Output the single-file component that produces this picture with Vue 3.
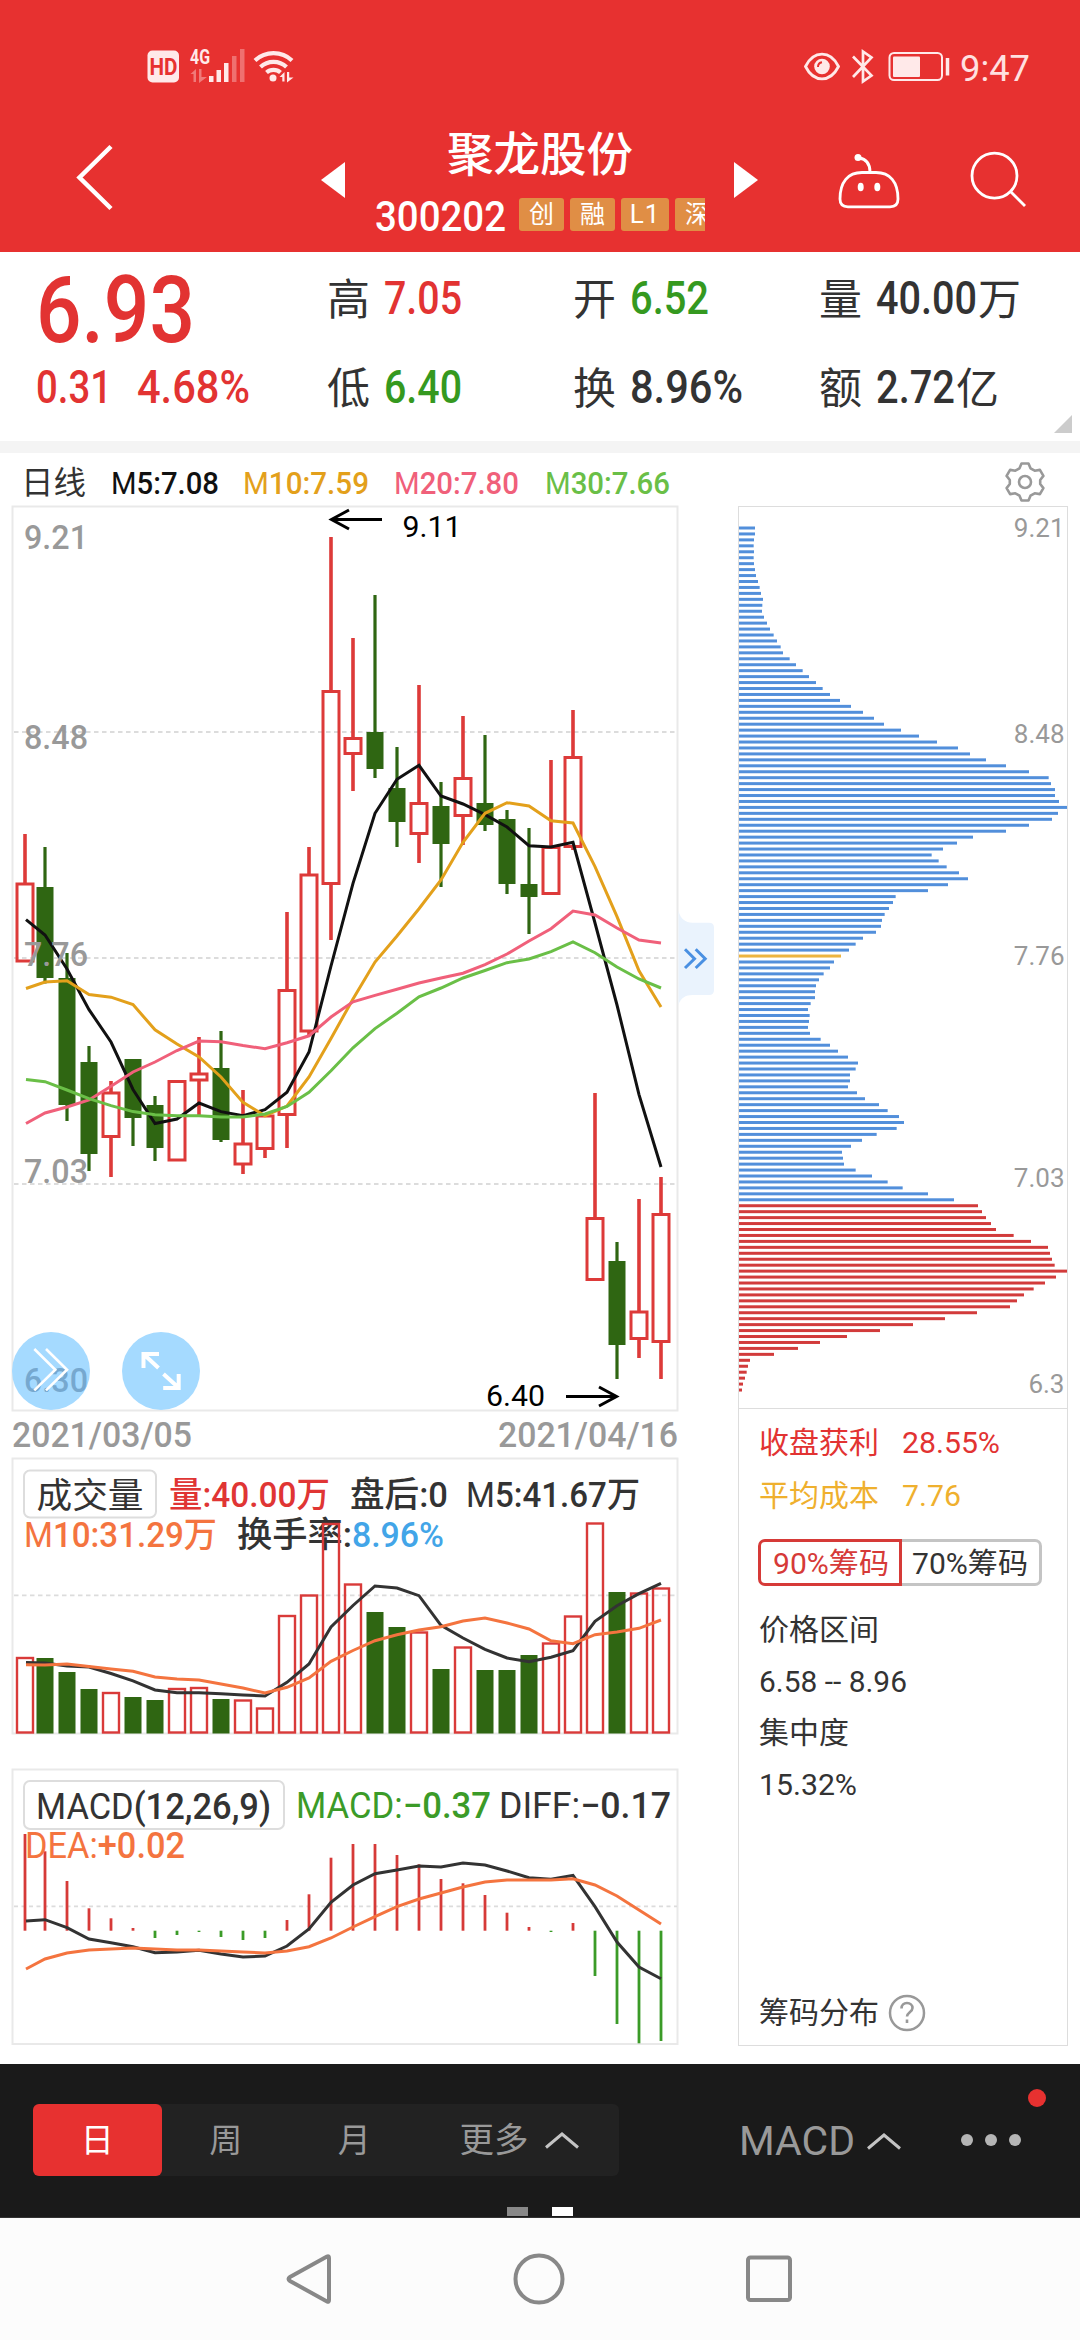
<script setup>
import { h } from 'vue'

// Single line of text squeezed to a fixed width; its box spans cap height down to the baseline.
// A leading "M" of an average label is set in the regular weight.
const Fit = (p) => {
  const height = Math.round(p.s * 7.11) / 10
  const label = /^M\d/.test(p.t) ? [h('tspan', { 'font-weight': 400 }, 'M'), p.t.slice(1)] : p.t
  return h('svg', { class: 'fit', width: p.w, height }, [
    h('text', { x: 0, y: height, 'font-size': p.s, textLength: p.w, lengthAdjust: 'spacingAndGlyphs', fill: 'currentColor' }, label),
  ])
}
Fit.props = ['t', 'w', 's']

const xs = Array.from({ length: 30 }, (_, i) => (i === 0 ? 25 : 23 + i * 22))

// [rising, high, low, body top, body bottom]
const candles = [
  [1, 834, 884, 884, 961], [0, 847, 983.5, 887, 978], [0, 953, 1121, 978, 1105], [0, 1046, 1171, 1062, 1154],
  [1, 1081, 1177, 1093, 1136.5], [0, 1059, 1146, 1059, 1118], [0, 1096, 1161, 1105, 1148], [1, 1082, 1160, 1081.5, 1160],
  [1, 1037, 1115, 1074, 1080], [0, 1031, 1142, 1068, 1140], [1, 1090, 1174, 1144, 1164], [1, 1116, 1158, 1116, 1148.5],
  [1, 912, 1148, 990.5, 1114.5], [1, 847, 1035, 875, 1031], [1, 537, 940, 691.5, 883.5], [1, 638, 791, 738.5, 753.5],
  [0, 595, 778, 732, 769], [0, 747, 847, 788, 822], [1, 685, 863, 803.5, 833.5], [0, 782, 887, 806, 844],
  [1, 716, 845, 778.5, 815.5], [0, 735, 831, 803, 825], [0, 810, 894, 819, 884], [0, 828, 934, 884, 897],
  [1, 760, 894, 847.5, 893.5], [1, 710, 850, 757.5, 846.5], [1, 1093, 1280, 1218.5, 1279.5], [0, 1242, 1379, 1261, 1345],
  [1, 1199, 1358, 1312, 1338.5], [1, 1177, 1379, 1214.5, 1341.5],
].map(([up, hi, lo, top, bot], i) => ({ up, hi, lo, top, bot, x: xs[i] }))

const line = (ys) => ys.map((y, i) => `${i === 0 ? 26 : xs[i]},${y}`).join(' ')

const priceLines = [
  { c: '#111', w: 3, p: line([919.7, 935, 969, 1009.6, 1042, 1089.5, 1123.5, 1119, 1103, 1111.6, 1115.7, 1109.7, 1092.3, 1052, 966, 883.3, 813.3, 779.3, 765.3, 796, 804, 814.7, 827, 845.7, 847, 842.3, 923, 1005, 1094.6, 1167]) },
  { c: '#e3a01b', w: 3, p: line([988.5, 982, 980.7, 994.5, 997.2, 1004.6, 1029.8, 1044, 1057, 1077, 1102.4, 1115.7, 1106, 1077, 1038.5, 999, 962, 936, 908.7, 880, 842.3, 813.3, 802.7, 806, 820.7, 823, 866.7, 916.7, 970.7, 1007]) },
  { c: '#f0607a', w: 3, p: line([1123.5, 1113, 1107, 1100, 1086.3, 1072, 1062, 1050.5, 1041, 1041.8, 1045.5, 1048.7, 1042.7, 1035.8, 1017, 1001.8, 995.4, 989.3, 983, 978, 973.2, 964.6, 954, 941, 928.7, 911, 915, 928, 940, 943]) },
  { c: '#6abf47', w: 3, p: line([1079.4, 1081.7, 1090, 1098.7, 1105.6, 1111.6, 1114.8, 1115.7, 1115.7, 1117, 1117, 1114, 1106.5, 1092.3, 1070.7, 1047.8, 1028.6, 1013.2, 996.8, 988, 978, 970.5, 962.7, 959, 951.7, 942, 952.7, 967, 979, 988]) },
]

const axis = [[549, '9.21'], [749, '8.48'], [966, '7.76'], [1182.5, '7.03']]

const volumeTops = [1658, 1658, 1672, 1689, 1693, 1697, 1700, 1689, 1688, 1699, 1700.5, 1708.5, 1616, 1595.5, 1524, 1584.5, 1612, 1627, 1632.5, 1669, 1647.5, 1670, 1670, 1655, 1643.5, 1616.5, 1523.5, 1592, 1593.5, 1588.5]
const volumes = volumeTops.map((y, i) => ({ y, x: xs[i], up: candles[i].up }))
const volumeM5 = line([1662.4, 1663, 1666, 1667, 1673.5, 1680.8, 1690, 1692.7, 1692.7, 1693.8, 1695, 1696, 1682.3, 1664, 1627, 1605.5, 1586, 1588, 1595.7, 1625.3, 1638, 1649.3, 1658, 1661.7, 1657.3, 1650.7, 1621.3, 1605.7, 1593.7, 1583.3])
const volumeM10 = line([1664.7, 1665, 1664, 1666.6, 1669, 1671.2, 1677, 1679, 1680, 1684, 1688, 1693, 1687.3, 1678, 1661.3, 1650.5, 1640.7, 1634.7, 1630, 1626.7, 1621, 1618, 1623, 1629, 1640.7, 1643.7, 1634.7, 1632, 1628.3, 1620])

const macd = [1834, 1851.3, 1881, 1908.3, 1918.3, 1928, 1938, 1935, 1932, 1937, 1940, 1938, 1920, 1894.3, 1857.7, 1844, 1844, 1855, 1864.3, 1879, 1883.3, 1895, 1912.7, 1927, 1932, 1923, 1976, 2024, 2043.3, 2041]
  .map((y, i) => ({ x: xs[i], y, c: y < 1930.7 ? '#d63a38' : '#3b9b28' }))
const diff = line([1921, 1919.7, 1927.7, 1939, 1942.7, 1946.7, 1952.7, 1952, 1950.3, 1954, 1957, 1956, 1946, 1929, 1902.3, 1885, 1873.7, 1870, 1866, 1867, 1863, 1865, 1871, 1877.7, 1879.3, 1875.3, 1906.7, 1942, 1967, 1978.7])
const dea = line([1969, 1959, 1953, 1950, 1949, 1948, 1949, 1950, 1950, 1951, 1952, 1953, 1951, 1946.7, 1938, 1927, 1916.7, 1906.7, 1899, 1893, 1887, 1882, 1880, 1880, 1880, 1878.7, 1885, 1896, 1910, 1924])

// Chip distribution: right end of every bar, in thirds of a pixel from x = 720
const chipEnds = [
  105, 105, 102, 101, 102, 101, 102, 105, 108, 114, 119, 123, 129, 127, 126, 132, 141, 150, 161, 171, 182, 189, 209, 228, 248, 267, 288, 308, 330, 360,
  393, 429, 462, 492, 543, 597, 651, 714, 750, 798, 858, 927, 986, 993, 1005, 1005, 1017, 1041, 1014, 996, 927, 858, 759, 711, 669, 635, 656, 680, 717, 744,
  684, 624, 527, 519, 507, 494, 486, 483, 468, 429, 407, 387, 363, 342, 330, 311, 297, 288, 285, 285, 272, 264, 269, 267, 264, 270, 302, 330, 354, 384,
  414, 407, 390, 390, 384, 411, 435, 477, 503, 537, 552, 530, 470, 426, 393, 366, 369, 372, 407, 456, 503, 548, 624, 702, 774, 786, 798, 813, 828, 881,
  933, 984, 990, 996, 1004, 1041, 1008, 975, 941, 912, 891, 870, 771, 675, 579, 480, 381, 300, 234, 162, 90, 84, 80, 75, 69, 66,
]
const chips = chipEnds.map((e, i) => ({
  y: 526.5 + i * 5.945,
  w: (e - 57) / 3,
  c: i === 72 ? '#ecb440' : i < 114 ? '#528fdb' : '#d23b3b',
}))
const chipAxis = [[537, '9.21'], [742.7, '8.48'], [965, '7.76'], [1187, '7.03'], [1392.7, '6.3']]
</script>

<template>
  <div class="app">
    <header class="header">
      <div class="status">
        <svg width="150" height="36" viewBox="146 48 150 36" fill="#ffe9e9">
          <rect x="147.500" y="50.500" width="31.500" height="32" rx="5" />
          <text x="149.500" y="74.500" font-size="23" font-weight="700" fill="#e73130" textLength="28" lengthAdjust="spacingAndGlyphs">HD</text>
          <text x="190" y="64" font-size="20" font-weight="700" textLength="20" lengthAdjust="spacingAndGlyphs">4G</text>
          <path d="M190.500 74l5.500-5v13h-2.500V74zM199 69h2.500v8h5.500l-8 6z" opacity=".4" />
          <path d="M209 76h4.500v6H209zM216.500 70h4.500v12h-4.500zM224 63h4.500v19H224z" />
          <path d="M232 56h4.500v26H232zM240 49h4.500v33H240z" opacity=".35" />
          <g fill="none" stroke="#ffe9e9" stroke-width="4.200">
            <path d="M255 60.500a27 27 0 0 1 37 0" /><path d="M260.500 67a19 19 0 0 1 26 0" /><path d="M266.500 72.500a10.500 10.500 0 0 1 14 0" />
          </g>
          <circle cx="273" cy="78" r="3.500" />
          <path d="M279.500 77l5-5v9.500h-2.200V77zM287 72h2.200v5.500h4.300l-6.500 5z" />
        </svg>
        <div class="status-right">
          <svg width="150" height="36" viewBox="802 48 150 36" fill="none" stroke="#ffe9e9" stroke-width="2.800">
            <path d="M805.500 66.500c4-8 9.500-12.300 16.500-12.300s12.500 4.300 16.500 12.300c-4 8-9.500 12.300-16.500 12.300s-12.500-4.300-16.500-12.300z" />
            <circle cx="822" cy="66.500" r="7.800" fill="#ffe9e9" stroke="none" />
            <path d="M818 67c0-3 1.500-4.500 4-4.800" stroke="#e73130" stroke-width="2" />
            <path d="M853 56.500l18.500 19-8.500 6V51.500l8.500 6-18.500 19.500" stroke-width="2.700" />
            <rect x="889.500" y="53" width="52.500" height="27" rx="4.500" stroke-width="2" />
            <rect x="893" y="56.500" width="27" height="20.500" rx="1" fill="#ffe9e9" stroke="none" />
            <path d="M947.500 58v17.500" stroke-width="3.500" />
          </svg>
          <Fit t="9:47" :w="70" :s="36" class="clock" />
        </div>
      </div>
      <nav class="titlebar">
        <svg class="back" width="42" height="68" viewBox="74 143 42 68" fill="none" stroke="#fff" stroke-width="4.500"><path d="M111 146.500L79.500 177.500 111 208.500" /></svg>
        <svg class="prev" width="24" height="36" viewBox="0 0 24 36" fill="#fff"><path d="M24 0v36L0 18z" /></svg>
        <div class="stock">
          <Fit t="聚龙股份" :w="186" :s="46.5" class="name" />
          <div class="code-row">
            <Fit t="300202" :w="131" :s="42" class="code" />
            <span class="tag">创</span><span class="tag">融</span><span class="tag tag-wide">L1</span><span class="tag">深</span>
          </div>
        </div>
        <svg class="next" width="24" height="36" viewBox="0 0 24 36" fill="#fff"><path d="M0 0v36l24-18z" /></svg>
        <svg class="robot" width="64" height="60" viewBox="838 151 64 60" fill="none" stroke="#fff" stroke-width="2.800">
          <path d="M841 199c0-17 8-26.500 22-26.500h14c14 0 22 9.500 22 26.500 0 5-3 7.800-8 7.800h-42c-5 0-8-2.800-8-7.800z" />
          <path d="M871 172c0-8-3.500-13-11-14" />
          <circle cx="859" cy="157.500" r="3.500" fill="#fff" stroke="none" />
          <ellipse cx="861.700" cy="187" rx="3" ry="4.300" fill="#fff" stroke="none" /><ellipse cx="878.300" cy="187" rx="3" ry="4.300" fill="#fff" stroke="none" />
        </svg>
        <svg width="60" height="58" viewBox="969 150 60 58" fill="none" stroke="#fff" stroke-width="2.800">
          <circle cx="994.500" cy="175.700" r="22.500" /><path d="M1010.500 191.500L1025 206" />
        </svg>
      </nav>
    </header>

    <section class="quote">
      <div class="last red">
        <Fit t="6.93" :w="159" :s="92" />
        <div class="change"><Fit t="0.31" :w="76" :s="45.5" /><Fit t="4.68%" :w="113" :s="45.5" /></div>
      </div>
      <div class="stats">
        <div class="stat"><Fit class="lbl" t="高" :w="43" :s="43" /><Fit class="red" t="7.05" :w="78" :s="45.5" /></div>
        <div class="stat"><Fit class="lbl" t="开" :w="43" :s="43" /><Fit class="green" t="6.52" :w="79" :s="45.5" /></div>
        <div class="stat"><Fit class="lbl" t="量" :w="43" :s="43" /><Fit t="40.00" :w="101" :s="45.5" /><Fit class="unit" t="万" :w="43" :s="43" /></div>
        <div class="stat"><Fit class="lbl" t="低" :w="43" :s="43" /><Fit class="green" t="6.40" :w="78" :s="45.5" /></div>
        <div class="stat"><Fit class="lbl" t="换" :w="43" :s="43" /><Fit t="8.96%" :w="113" :s="45.5" /></div>
        <div class="stat"><Fit class="lbl" t="额" :w="43" :s="43" /><Fit t="2.72" :w="79" :s="45.5" /><Fit class="unit" t="亿" :w="43" :s="43" /></div>
      </div>
      <i class="corner"></i>
    </section>

    <div class="averages">
      <Fit class="period" t="日线" :w="65" :s="32" />
      <Fit t="M5:7.08" :w="108" :s="32" class="m5" />
      <Fit t="M10:7.59" :w="126" :s="32" class="m10" />
      <Fit t="M20:7.80" :w="125" :s="32" class="m20" />
      <Fit t="M30:7.66" :w="125" :s="32" class="m30" />
      <svg class="gear" width="44" height="44" viewBox="-22 -22 44 44" fill="none" stroke="#999" stroke-width="2.600" stroke-linejoin="round">
        <path d="M-3.500-18.500h7l2 4.800 4.200 2.400 5.200-.8 3.500 6-3.200 4.100v4l3.200 4.100-3.500 6-5.200-.8-4.200 2.400-2 4.800h-7l-2-4.800-4.200-2.400-5.200.8-3.500-6 3.200-4.100v-4l-3.200-4.100 3.500-6 5.200.8 4.200-2.400z" />
        <circle r="6" />
      </svg>
    </div>

    <main class="board">
      <div class="charts">
        <svg class="chart" width="720" height="908" viewBox="0 504 720 908">
          <rect x="12.500" y="506.500" width="665" height="904" fill="none" stroke="#e9e9e9" stroke-width="2" />
          <path d="M14 732H677M14 958H677M14 1184H677" stroke="#dcdcdc" stroke-width="1.800" stroke-dasharray="4.500 3.500" />
          <g v-for="k in candles" :key="k.x">
            <template v-if="k.up">
              <path :d="`M${k.x} ${k.hi}V${k.top}M${k.x} ${k.bot}V${Math.max(k.lo, k.bot)}`" stroke="#dd3a39" stroke-width="3.600" />
              <rect :x="k.x - 8" :y="k.top" width="16" :height="k.bot - k.top" fill="none" stroke="#dd3a39" stroke-width="3" />
            </template>
            <template v-else>
              <path :d="`M${k.x} ${k.hi}V${k.lo}`" stroke="#2f6612" stroke-width="3.200" />
              <rect :x="k.x - 8.500" :y="k.top" width="17" :height="k.bot - k.top" fill="#2f6612" />
            </template>
          </g>
          <polyline v-for="l in priceLines" :key="l.c" :points="l.p" fill="none" :stroke="l.c" :stroke-width="l.w" />
          <circle cx="51" cy="1371" r="39" fill="#a5daff" /><circle cx="161" cy="1371" r="39" fill="#a5daff" />
          <g font-size="33.500" font-weight="500" fill="#999">
            <text v-for="a in axis" :key="a[0]" x="24" :y="a[0]" textLength="64" lengthAdjust="spacingAndGlyphs">{{ a[1] }}</text>
            <text x="24" y="1392" textLength="64" lengthAdjust="spacingAndGlyphs" fill="#76a8cf">6.30</text>
          </g>
          <g fill="none" stroke="#fff">
            <path d="M34.300 1349l21 20.700-21 20.700M46 1349l21 20.700-21 20.700" stroke-width="2.600" />
            <path d="M143.500 1368v-14h15.500M144 1354.500l14.500 13.500M178.700 1374v14h-15.500M178.300 1387.500L163.500 1374" stroke-width="4" />
          </g>
          <g fill="none" stroke="#000" stroke-width="3">
            <path d="M382 519.500H332M349 510l-17.500 9.500L349 529" /><path d="M566 1396.500h50M599 1387l17.500 9.500L599 1406" />
          </g>
          <g font-size="29.500" fill="#000"><text x="402.500" y="536.700" textLength="59" lengthAdjust="spacingAndGlyphs">9.11</text><text x="486" y="1405.700" textLength="59" lengthAdjust="spacingAndGlyphs">6.40</text></g>
          <path d="M678.500 911c2 8 7 11.700 14 11.700H709q5 0 5 5V990q0 5-5 5h-16.500c-7 0-12 3-14 10z" fill="#eaf3fd" />
          <path d="M685 949.300l9.500 9.400-9.500 9.300M695.700 949.300l9.500 9.400-9.500 9.300" fill="none" stroke="#4a90e2" stroke-width="3" />
        </svg>
        <div class="dates"><Fit t="2021/03/05" :w="180" :s="35" /><Fit t="2021/04/16" :w="180" :s="35" /></div>
        <svg class="chart" width="720" height="280" viewBox="0 1456 720 280">
          <rect x="12.500" y="1458.500" width="665" height="275" fill="none" stroke="#e9e9e9" stroke-width="2" />
          <path d="M14 1595.300H677" stroke="#dcdcdc" stroke-width="1.800" stroke-dasharray="4.500 3.500" />
          <rect x="24" y="1470.500" width="132" height="47" rx="6" fill="#fff" stroke="#ddd" stroke-width="2" />
          <g font-size="35" font-weight="500" fill="#333">
            <text x="36.500" y="1508" font-weight="400" font-size="35.500" textLength="107" lengthAdjust="spacingAndGlyphs">成交量</text>
            <text x="169" y="1507" fill="#e03534" textLength="161" lengthAdjust="spacingAndGlyphs">量:40.00万</text>
            <text x="350" y="1507" textLength="98" lengthAdjust="spacingAndGlyphs">盘后:0</text>
            <text x="466" y="1507" textLength="174" lengthAdjust="spacingAndGlyphs"><tspan font-weight="400">M</tspan>5:41.67万</text>
            <text x="24" y="1547" fill="#f4743f" textLength="193" lengthAdjust="spacingAndGlyphs"><tspan font-weight="400">M</tspan>10:31.29万</text>
            <text x="237" y="1547" textLength="115" lengthAdjust="spacingAndGlyphs">换手率:</text>
            <text x="352" y="1547" fill="#42a5e8" textLength="92" lengthAdjust="spacingAndGlyphs">8.96%</text>
          </g>
          <template v-for="v in volumes" :key="v.x">
            <rect v-if="v.up" :x="v.x - 8" :y="v.y" width="16" :height="1732.5 - v.y" fill="none" stroke="#d93a39" stroke-width="2.400" />
            <rect v-else :x="v.x - 8.500" :y="v.y" width="17" :height="1733.5 - v.y" fill="#2f6612" />
          </template>
          <polyline :points="volumeM5" fill="none" stroke="#333" stroke-width="3" />
          <polyline :points="volumeM10" fill="none" stroke="#f4743f" stroke-width="3" />
        </svg>
        <svg class="chart macd" width="720" height="280" viewBox="0 1767 720 280">
          <rect x="12.500" y="1769.500" width="665" height="274.500" fill="none" stroke="#e9e9e9" stroke-width="2" />
          <path d="M14 1906.300H677" stroke="#dcdcdc" stroke-width="1.800" stroke-dasharray="4 3.500" />
          <path v-for="b in macd" :key="b.x" :d="`M${b.x} 1930.700V${b.y}`" :stroke="b.c" stroke-width="2.800" />
          <polyline :points="diff" fill="none" stroke="#333" stroke-width="3" />
          <polyline :points="dea" fill="none" stroke="#f4743f" stroke-width="3" />
          <rect x="24" y="1781" width="260" height="48" rx="6" fill="#fff" stroke="#ddd" stroke-width="2" />
          <g font-size="36" fill="#333">
            <text x="36" y="1819" textLength="235" lengthAdjust="spacingAndGlyphs">MACD<tspan font-weight="500">(12,26,9)</tspan></text>
            <text x="296" y="1818" fill="#3b9b28" textLength="195" lengthAdjust="spacingAndGlyphs">MACD:<tspan font-weight="500">−0.37</tspan></text>
            <text x="499" y="1818" textLength="172" lengthAdjust="spacingAndGlyphs">DIFF:<tspan font-weight="500">−0.17</tspan></text>
            <text x="25" y="1858" fill="#f4743f" textLength="160" lengthAdjust="spacingAndGlyphs">DEA:<tspan font-weight="500">+0.02</tspan></text>
          </g>
        </svg>
      </div>

      <aside class="side">
        <svg class="chart chips" width="328" height="901" viewBox="739 507 328 901">
          <rect v-for="c in chips" :key="c.y" x="739" :y="c.y" :width="c.w" height="3" :fill="c.c" />
          <g font-size="26" fill="#999" text-anchor="end"><text v-for="a in chipAxis" :key="a[0]" x="1064.500" :y="a[0]">{{ a[1] }}</text></g>
        </svg>
        <div class="info">
          <p class="row red"><Fit t="收盘获利" :w="120" :s="29.5" /><Fit t="28.55%" :w="98" :s="29.5" /></p>
          <p class="row gold"><Fit t="平均成本" :w="120" :s="29.5" /><Fit t="7.76" :w="59" :s="29.5" /></p>
          <div class="switch"><div class="on"><Fit t="90%筹码" :w="116" :s="29" /></div><div><Fit t="70%筹码" :w="116" :s="29" /></div></div>
          <Fit t="价格区间" :w="120" :s="29.5" />
          <Fit t="6.58 -- 8.96" :w="148" :s="29.5" />
          <Fit t="集中度" :w="90" :s="29.5" />
          <Fit t="15.32%" :w="98" :s="29.5" />
          <div class="foot">
            <Fit t="筹码分布" :w="120" :s="29.5" />
            <svg width="38" height="38" viewBox="-19 -19 38 38" fill="none" stroke="#999"><circle r="17" stroke-width="2.500" /><path d="M-5.500-4.500c0-3.500 2.300-5.500 5.500-5.500s5.500 2 5.500 5c0 4-5.500 4.500-5.500 8.500M0 6.500v3.500" stroke-width="2.600" /></svg>
          </div>
        </div>
      </aside>
    </main>

    <footer class="toolbar">
      <div class="tools">
        <div class="periods">
          <span class="item active">日</span><span class="item">周</span><span class="item">月</span>
          <span class="item more">更多<svg width="34" height="17" viewBox="0 0 34 17" fill="none" stroke="#c4c4c4" stroke-width="3"><path d="M1 15.500L17 2l16 13.500" /></svg></span>
        </div>
        <div class="indicator"><Fit t="MACD" :w="116" :s="40" /><svg width="34" height="17" viewBox="0 0 34 17" fill="none" stroke="#c4c4c4" stroke-width="3"><path d="M1 15.500L17 2l16 13.500" /></svg></div>
        <div class="dots"><i></i><i></i><i></i><b></b></div>
      </div>
      <div class="pager"><i></i><i class="cur"></i></div>
    </footer>

    <div class="navbar">
      <svg width="50" height="56" viewBox="284 2251 50 56"><path d="M327 2256.500q2-1 2 1.500v42q0 2.500-2 1.500l-37-20.500q-3-2 0-4z" /></svg>
      <svg width="56" height="56" viewBox="-28 -28 56 56"><circle r="23.500" /></svg>
      <svg width="50" height="50" viewBox="744 2254 50 50"><rect x="748" y="2257.500" width="42" height="42.500" rx="2.500" /></svg>
    </div>
  </div>
</template>

<style>
body { margin: 0; background: #fff; }
</style>

<style scoped>
.app { width: 1080px; height: 2340px; overflow: hidden; display: flex; flex-direction: column; background: #fff; color: #333; font-family: Roboto, "Noto Sans CJK SC", sans-serif; }
svg { display: block; flex: none; overflow: visible; }
.chart { overflow: hidden; }
p { margin: 0; }
.red { color: #e23332; }
.green { color: #35991f; }
.gold { color: #efb02e; }

.header { height: 252px; flex: none; background: #e73130; color: #fff; }
.status { display: flex; justify-content: space-between; padding: 48px 50px 0 146px; height: 36px; }
.status-right { display: flex; gap: 8px; }
.clock { margin-top: 6.500px; color: #ffe0e0; }
.titlebar { display: flex; align-items: flex-start; padding-left: 74px; height: 168px; }
.back { margin-top: 59px; }
.prev { margin: 78px 0 0 205px; }
.stock { width: 330px; margin-left: 30px; padding-top: 54px; display: flex; flex-direction: column; align-items: center; overflow: hidden; }
.name { font-weight: 500; }
.code-row { width: 330px; margin-top: 27px; height: 40px; display: flex; gap: 6px; }
.code { font-weight: 500; margin: 3px 7px 0 0; }
.tag { flex: none; width: 45px; height: 33px; line-height: 33px; border-radius: 3px; background: #e08e45; font-size: 25px; text-align: center; }
.tag-wide { width: 48px; letter-spacing: 1px; font-size: 26px; }
.next { margin: 78px 0 0 29px; }
.robot { margin: 67px 0 0 79px; }
.robot + svg { margin: 66px 0 0 68px; }

.quote { position: relative; height: 189px; flex: none; display: flex; padding-left: 36px; border-bottom: 12px solid #f4f4f4; box-sizing: content-box; font-weight: 500; }
.last { width: 291px; padding-top: 24.500px; }
.change { display: flex; gap: 25px; margin-top: 29px; }
.stats { display: grid; grid-template-columns: repeat(3, 246px); row-gap: 56.500px; padding-top: 30px; align-content: start; }
.stat { display: flex; align-items: flex-end; }
.stat .lbl { font-weight: 400; margin-right: 13.500px; }
.stat .unit { font-weight: 400; margin-left: 1px; }
.corner { position: absolute; right: 8px; bottom: 8px; border-left: 18px solid transparent; border-bottom: 18px solid #ccc; }

.averages { height: 53px; flex: none; display: flex; align-items: flex-start; padding-left: 21px; font-weight: 500; }
.averages > .fit { margin-top: 18px; }
.averages .period { font-weight: 400; }
.m5 { color: #111; margin-left: 25px; }
.m10 { color: #e3a01b; margin-left: 24px; }
.m20 { color: #f0607a; margin-left: 25px; }
.m30 { color: #6abf47; margin-left: 26px; }
.gear { margin: 7px 0 0 auto; padding-right: 33px; }

.board { height: 1558px; flex: none; display: flex; }
.charts { width: 738px; margin-top: -2px; }
.dates { width: 666px; height: 34px; padding: 10px 0 0 12px; display: flex; justify-content: space-between; color: #999; font-weight: 500; }
.macd { margin-top: 31px; }
.side { width: 328px; height: 1538px; border: 1px solid #ddd; }
.chips { border-bottom: 1px solid #ddd; }
.info { padding-left: 19.500px; display: flex; flex-direction: column; align-items: flex-start; }
.row { display: flex; align-items: flex-end; height: 21px; gap: 23px; margin-top: 23px; }
.row + .row { margin-top: 32px; }
.switch { display: flex; margin: 33px 0 33px -1px; }
.switch div { width: 140px; height: 47px; box-sizing: border-box; border: 3px solid #c4c4c4; border-left: 0; border-radius: 0 7px 7px 0; display: flex; align-items: center; padding: 1px 0 0 10px; }
.switch .on { width: 144px; border: 3px solid #d63a38; border-radius: 7px 0 0 7px; color: #d63a38; padding-left: 12px; }
.info > .fit { margin-bottom: 30.700px; }
.foot { display: flex; align-items: center; gap: 9.500px; margin-top: 168px; }

.toolbar { height: 153.500px; flex: none; box-sizing: border-box; background: #1a1a1a; border-bottom: 1px solid #333; color: #999; }
.tools { display: flex; height: 112px; padding: 40px 0 0 33px; box-sizing: border-box; }
.periods { display: flex; width: 586px; height: 72px; background: #222; border-radius: 6px; line-height: 74px; font-size: 33px; }
.item { width: 128.500px; text-align: center; }
.active { background: #e73130; color: #fff; border-radius: 6px; }
.more { width: auto; margin-left: 41px; font-size: 34.500px; display: flex; gap: 16px; align-items: center; }
.indicator { display: flex; align-items: center; height: 74px; margin-left: 120px; gap: 12px; }
.dots { position: relative; display: flex; gap: 12px; align-items: center; height: 72px; margin-left: 60px; }
.dots i { width: 12px; height: 12px; border-radius: 50%; background: #b5b5b5; }
.dots b { position: absolute; left: 67px; top: -15px; width: 18px; height: 18px; border-radius: 50%; background: #e73130; }
.pager { display: flex; justify-content: center; gap: 24px; padding-top: 31px; }
.pager i { width: 21px; height: 9px; background: #888; }
.pager .cur { background: #fff; }

.navbar { flex: 1; background: #fcfcfc; display: flex; align-items: center; justify-content: space-between; padding: 0 286px 0 284px; }
.navbar svg { fill: none; stroke: #888; stroke-width: 4; }
</style>
